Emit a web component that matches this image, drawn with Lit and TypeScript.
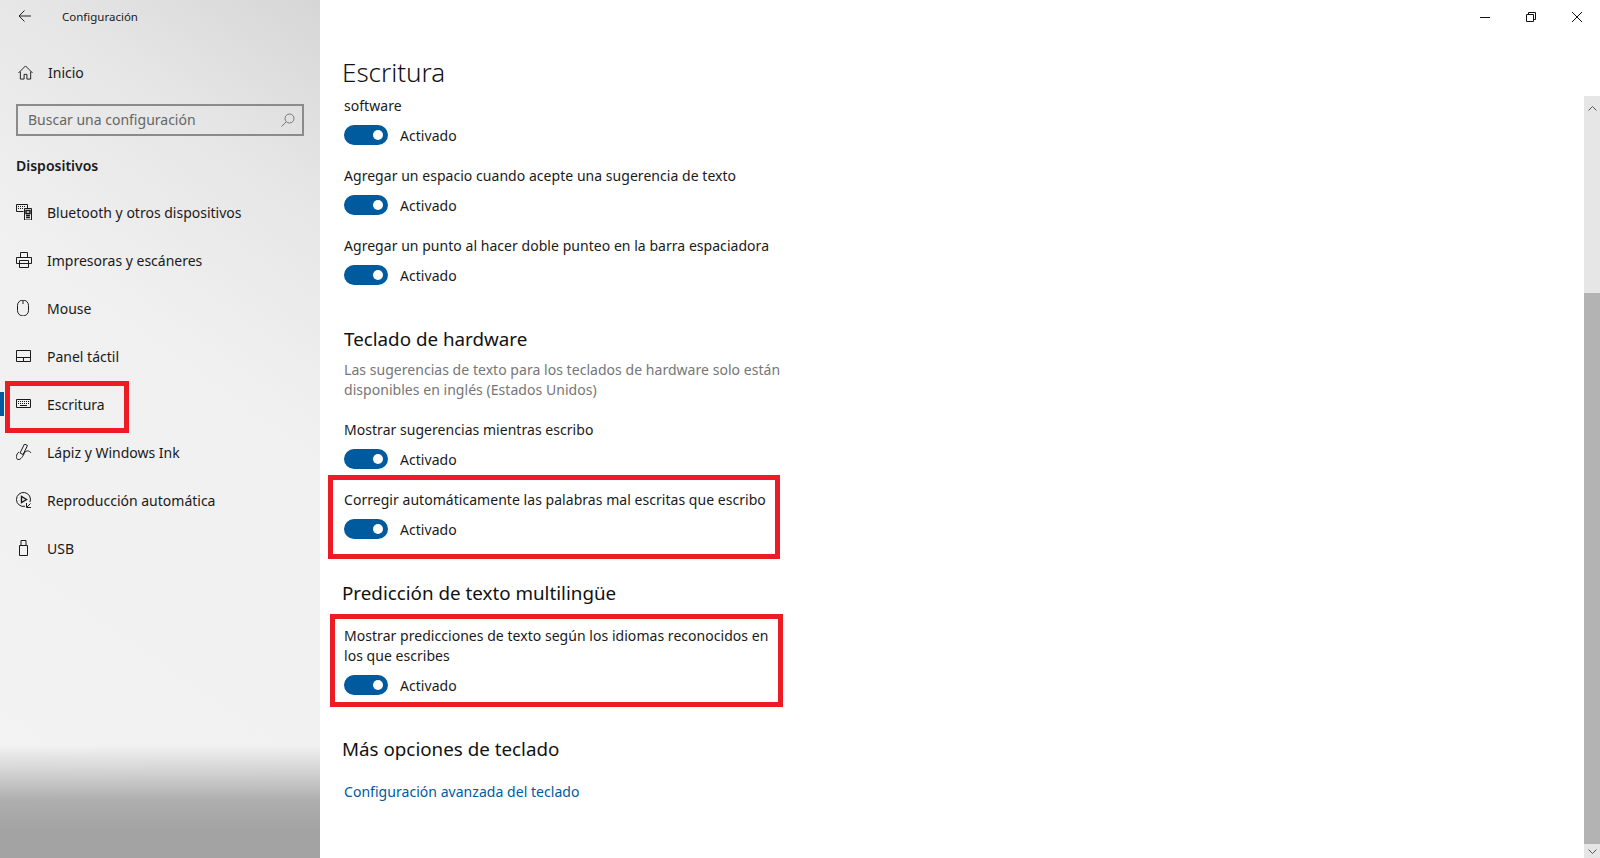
import { LitElement, html, css, svg } from "lit";
import { customElement } from "lit/decorators.js";

const ic = (c: unknown) => html`<svg class="ic" viewBox="0 0 16 16" fill="none" stroke="#1a1a1a" stroke-width="1">${c}</svg>`;
const icons = {
  bt: svg`<path d="M7.500 7.500H.5v-7h11V4"/><path d="M2 2.500h8M2 4.500h5" stroke-dasharray="1 1"/><path d="M8.500 4.500h7v11.500h-7z"/><path d="M10 6.500h4v3h-4zM10 11.500h4M10 13.500h4" stroke-width="1.500"/>`,
  printer: svg`<path d="M4.500.5h7v5h-7zM.5 5.500h15v6h-15zM3.500 8.500h9v7h-9z"/>`,
  mouse: svg`<path d="M1.500 5.500a5.500 5.500 0 0 1 11 0v5a5.500 5.500 0 0 1-11 0zM7 0v4"/>`,
  panel: svg`<path d="M.5 2.500h14v11h-14zM.5 9.500h14M7.500 9.500v4"/>`,
  keyboard: svg`<path d="M.5 3.500h14v8h-14z"/><path d="M2 5.500h11M2 7.500h11" stroke-dasharray="1 1" stroke-width="1.200"/><path d="M4 9.500h7"/>`,
  pen: svg`<path d="M8.500 0 4 9l3 1.500L11.500 1.500z"/><path d="M3 8C0 10-.5 15 2 15.500 5 16 7 12 9 8c2-2 5-1 6 1"/>`,
  play: svg`<path d="M9 14.300A7 7 0 1 1 14 10"/><path d="M5.500 4.500v6l5-3z" stroke-width="1.400"/><path d="M14.500 11.500l-3.500 3.500M10.500 11v4.500H15"/>`,
  usb: svg`<path d="M3.500 5.500h8v10h-8zM5 5.500V.5h5v5"/>`,
};

@customElement("app-root")
export class AppRoot extends LitElement {
  static styles = css`
    :host { display: block; position: relative; width: 1600px; height: 858px; overflow: hidden; background: #fff;
      font-family: "Noto Sans", sans-serif; font-size: 14px; color: #1a1a1a; }
    .page { display: flex; height: 858px; }
    .side { width: 320px; flex: none; box-sizing: border-box; padding-left: 16px;
      background:
        linear-gradient(to bottom, rgba(163,163,163,0) 745px, rgba(163,163,163,.4) 772px, rgba(163,163,163,.85) 800px, rgba(163,163,163,1) 830px),
        linear-gradient(215deg, #d6d6d6 0, #e6e6e6 170px, #f0f0f0 360px, #f3f3f3 100%); }
    .top { height: 32px; display: flex; align-items: center; }
    .back { width: 14px; height: 12px; margin-left: 2px; }
    .app { font-size: 11.500px; margin-left: 30px; }
    .home { height: 24px; margin-top: 28px; display: flex; align-items: center; gap: 15px; margin-left: 2px; }
    .home .ic { width: 15px; height: 15px; }
    .search { box-sizing: border-box; width: 288px; height: 32px; margin-top: 20px; border: 2px solid #8b8b8b;
      display: flex; align-items: center; justify-content: space-between; padding: 0 7px 2px 10px; color: #666; }
    .search svg { width: 14px; height: 14px; margin-top: 2px; }
    .cat { font-weight: 600; margin-top: 18px; height: 24px; line-height: 24px; }
    .nav { margin-top: 10px; }
    .item { height: 48px; display: flex; align-items: center; gap: 15px; }
    .ic { width: 16px; height: 16px; flex: none; }
    .main { flex: 1; display: flex; flex-direction: column; min-width: 0; }
    .titlebar { height: 34px; flex: none; display: flex; justify-content: flex-end; align-items: center; padding-right: 18px; gap: 36px; }
    .titlebar svg { width: 10px; height: 10px; }
    .title { height: 62px; flex: none; padding-left: 22px; font-size: 26px; font-weight: 300; line-height: 76px; box-sizing: border-box; color: #111; }
    .body { flex: 1; display: flex; min-height: 0; }
    .content { flex: 1; padding-left: 24px; letter-spacing: .04px; }
    .set { margin-bottom: 21px; width: 440px; }
    .label { line-height: 20px; }
    .tg { display: flex; align-items: center; gap: 12px; margin-top: 9px; height: 20px; }
    .sw { width: 44px; height: 20px; border-radius: 10px; background: #005a9e; display: flex; align-items: center; justify-content: flex-end; padding-right: 5px; box-sizing: border-box; }
    .sw i { width: 10px; height: 10px; border-radius: 50%; background: #fff; display: block; }
    h2 { margin: 0 0 0 -2px; font-size: 18.800px; font-weight: 400; line-height: 28px; color: #111; letter-spacing: 0; }
    .h1 { margin-top: 40px; margin-left: 0; }
    .desc { color: #767676; line-height: 20px; margin-top: 7px; margin-bottom: 20px; width: 440px; }
    .h3 { margin-top: 40px; margin-bottom: 19px; }
    .h4 { margin-top: 40px; margin-bottom: 19px; }
    .link { color: #005a9e; line-height: 20px; }
    .bar { width: 16px; flex: none; background: #e6e6e6; display: flex; flex-direction: column; }
    .bar .up, .bar .dn { height: 24px; display: flex; align-items: center; justify-content: center; flex: none; }
    .bar .dn { height: 14px; }
    .bar svg { width: 9px; height: 5px; }
    .track { height: 173px; flex: none; }
    .thumb { flex: 1; background: #b3b3b3; }
    .mark { position: absolute; border: 5px solid #ed1c24; box-sizing: border-box; pointer-events: none; }
    .m1 { left: 5px; top: 381px; width: 124px; height: 52px; }
    .m2 { left: 328px; top: 475px; width: 452px; height: 84px; }
    .m3 { left: 330px; top: 614px; width: 453px; height: 93px; }
    .active { position: absolute; left: 0; top: 392px; width: 4px; height: 24px; background: #005a9e; }
  `;

  private toggle() {
    return html`<div class="tg"><div class="sw"><i></i></div><span>Activado</span></div>`;
  }
  private setting(l: unknown) {
    return html`<div class="set"><div class="label">${l}</div>${this.toggle()}</div>`;
  }

  render() {
    const nav: [string, unknown][] = [
      ["Bluetooth y otros dispositivos", icons.bt],
      ["Impresoras y escáneres", icons.printer],
      ["Mouse", icons.mouse],
      ["Panel táctil", icons.panel],
      ["Escritura", icons.keyboard],
      ["Lápiz y Windows Ink", icons.pen],
      ["Reproducción automática", icons.play],
      ["USB", icons.usb],
    ];
    return html`
      <div class="page">
        <aside class="side">
          <div class="top">
            <svg class="back" viewBox="0 0 14 12" fill="none" stroke="#222" stroke-width="1"><path d="M13 6H1M6.500.5 1 6l5.500 5.500"/></svg>
            <span class="app">Configuración</span>
          </div>
          <div class="home">
            ${ic(svg`<path d="M.5 8.500 8 1l7.500 7.500M2.500 7v8h4v-5h3v5h4V7"/>`)}
            <span>Inicio</span>
          </div>
          <div class="search">
            <span>Buscar una configuración</span>
            <svg viewBox="0 0 14 14" fill="none" stroke="#777" stroke-width="1"><circle cx="8.500" cy="5.500" r="4.500"/><path d="M5.300 8.700.5 13.500"/></svg>
          </div>
          <div class="cat">Dispositivos</div>
          <div class="nav">
            ${nav.map(([t, i]) => html`<div class="item">${ic(i)}<span>${t}</span></div>`)}
          </div>
        </aside>
        <main class="main">
          <div class="titlebar">
            <svg viewBox="0 0 10 10" fill="none" stroke="#111"><path d="M0 5.500h10"/></svg>
            <svg viewBox="0 0 10 10" fill="none" stroke="#111"><path d="M.5 2.500h7v7h-7zM2.500 2.500v-2h7v7h-2"/></svg>
            <svg viewBox="0 0 10 10" fill="none" stroke="#111"><path d="M0 0l10 10M10 0 0 10"/></svg>
          </div>
          <div class="title">Escritura</div>
          <div class="body">
            <div class="content">
              ${this.setting("software")}
              ${this.setting("Agregar un espacio cuando acepte una sugerencia de texto")}
              ${this.setting("Agregar un punto al hacer doble punteo en la barra espaciadora")}
              <h2 class="h1">Teclado de hardware</h2>
              <div class="desc">Las sugerencias de texto para los teclados de hardware solo están disponibles en inglés (Estados Unidos)</div>
              ${this.setting("Mostrar sugerencias mientras escribo")}
              ${this.setting("Corregir automáticamente las palabras mal escritas que escribo")}
              <h2 class="h3">Predicción de texto multilingüe</h2>
              ${this.setting("Mostrar predicciones de texto según los idiomas reconocidos en los que escribes")}
              <h2 class="h4">Más opciones de teclado</h2>
              <div class="link">Configuración avanzada del teclado</div>
            </div>
            <div class="bar">
              <div class="up"><svg viewBox="0 0 9 5" fill="none" stroke="#555"><path d="M.5 4.500l4-4 4 4"/></svg></div>
              <div class="track"></div>
              <div class="thumb"></div>
              <div class="dn"><svg viewBox="0 0 9 5" fill="none" stroke="#555"><path d="M.5.500l4 4 4-4"/></svg></div>
            </div>
          </div>
        </main>
      </div>
      <div class="active"></div>
      <div class="mark m1"></div>
      <div class="mark m2"></div>
      <div class="mark m3"></div>
    `;
  }
}
